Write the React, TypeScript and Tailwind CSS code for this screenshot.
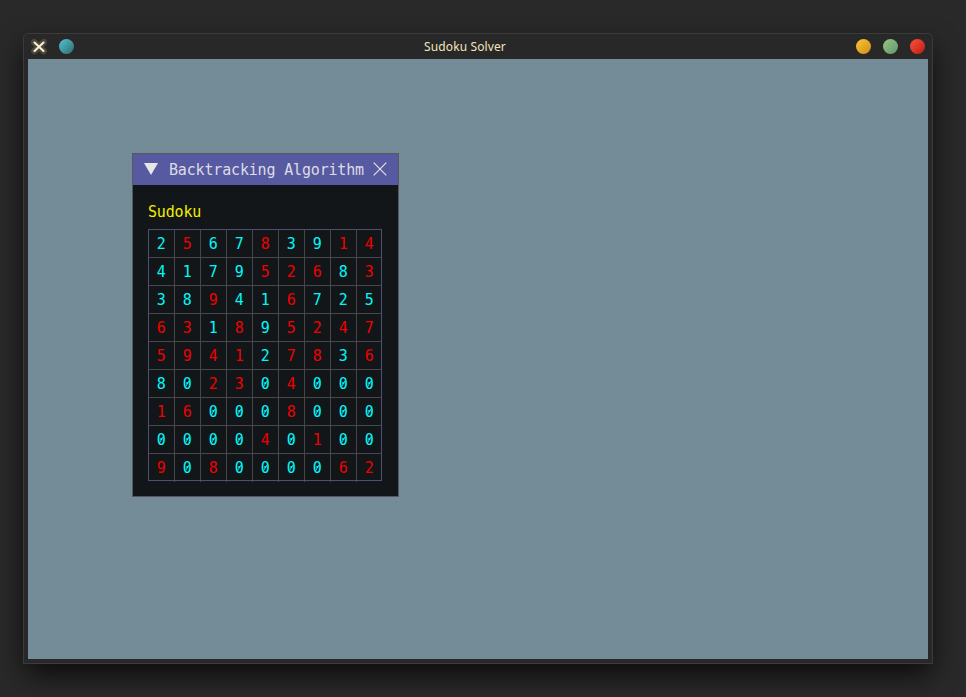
const rows = [
  "256783914",
  "417952683",
  "389416725",
  "631895247",
  "594127836",
  "802304000",
  "160008000",
  "000040100",
  "908000062",
];

// r = red cell, c = cyan cell
const colors = [
  "crccrccrr",
  "ccccrrrcr",
  "ccrccrccc",
  "rrcrcrrrr",
  "rrrrcrrcr",
  "ccrrcrccc",
  "rrcccrccc",
  "ccccrcrcc",
  "rcrccccrr",
];

function Digit({ value, red }: { value: string; red: boolean }) {
  return (
    <span className={`relative block leading-[28px] ${red ? "text-[#f00000]" : "text-[#00f8f8]"}`}>
      {value}
      {value === "0" && (
        <svg className="absolute left-0 top-0" width="9" height="28" viewBox="0 0 9 28">
          <path d="M2.7 16.6 L6 11" stroke="currentColor" strokeWidth="1" />
        </svg>
      )}
    </span>
  );
}

function TitleBar() {
  return (
    <div className="flex h-[25px] items-center justify-between pr-[7px] pl-1.5 font-['Noto_Sans','Open_Sans',sans-serif] text-[12px] text-[#f2e5bc]">
      <div className="flex items-center gap-[11px]">
        <svg width="18" height="18" viewBox="0 0 18 18" strokeLinecap="round">
          <path d="M4.3 4.3 L13.7 13.1 M13.7 4.3 L4.3 13.1" stroke="#4b4841" strokeWidth="6.5" />
          <path d="M4.5 4.5 L13.5 13 M13.5 4.5 L4.5 13" stroke="#fbf0ca" strokeWidth="2.1" />
        </svg>
        <span className="h-[15px] w-[15px] rounded-full bg-linear-to-br from-[#53c5d6] to-[#306c70]" />
      </div>
      <div className="tracking-[0.12px]">Sudoku Solver</div>
      <div className="flex justify-end gap-3">
        <span className="h-[15px] w-[15px] rounded-full bg-linear-to-br from-[#ffc52f] to-[#cd8d1e]" />
        <span className="h-[15px] w-[15px] rounded-full bg-linear-to-br from-[#9bc67c] to-[#5e9771]" />
        <span className="h-[15px] w-[15px] rounded-full bg-linear-to-br from-[#ff5039] to-[#be1915]" />
      </div>
    </div>
  );
}

function SudokuGrid() {
  return (
    <div className="relative w-[234px]">
      {rows.map((row, y) => (
        <div key={y} className="flex h-7">
          {row.split("").map((value, x) => (
            <div key={x} className="flex w-[26px] border-t border-l border-[#47474b] pl-[7.75px]">
              <Digit value={value} red={colors[y][x] === "r"} />
            </div>
          ))}
        </div>
      ))}
      <div className="flex h-px">
        {rows.map((_, x) => (
          <div key={x} className={x === 0 ? "w-[26px]" : "w-[26px] border-l border-[#47474b]"} />
        ))}
      </div>
      <div className="absolute inset-x-0 top-0 h-[252px] border border-[#4f4f73]" />
    </div>
  );
}

function AlgorithmWindow() {
  return (
    <div className="mt-[94px] ml-[104px] h-[344px] w-[267px] border border-[#57585f] bg-[#121618] font-['DejaVu_Sans_Mono','Liberation_Mono',monospace] text-[15px] tracking-[-0.17px]">
      <div className="flex h-[31px] items-center bg-[#575aa0] pl-[11px] text-[#dcdce6]">
        <svg width="14" height="12" viewBox="0 0 14 12" className="mb-0.5 shrink-0">
          <path d="M0 0 H14 L7 12 Z" fill="#e7e7e7" />
        </svg>
        <span className="mt-px ml-[11px] w-[195px] whitespace-nowrap">Backtracking Algorithm</span>
        <svg width="14" height="14" viewBox="0 0 14 14" className="ml-[9px] mb-px shrink-0">
          <path d="M0.7 0.7 L13.3 13.3 M13.3 0.7 L0.7 13.3" stroke="#e7e7e7" strokeWidth="1.1" />
        </svg>
      </div>
      <div className="px-[15px] pt-[17px]">
        <div className="h-[27px] leading-5 text-[#f0f000]">Sudoku</div>
        <SudokuGrid />
      </div>
    </div>
  );
}

export default function App() {
  return (
    <div className="h-[697px] w-[966px] overflow-hidden bg-[#292929] pt-[33px] pl-[23px]">
      <div className="h-[631px] w-[910px] rounded-t-[5px] border border-[#3b3b3b] bg-[#282828] shadow-[0_12px_28px_-2px_rgba(0,0,0,0.75)]">
        <TitleBar />
        <div className="mx-1 flex h-[600px] w-[900px] items-start bg-[#748c98]">
          <AlgorithmWindow />
        </div>
      </div>
    </div>
  );
}
